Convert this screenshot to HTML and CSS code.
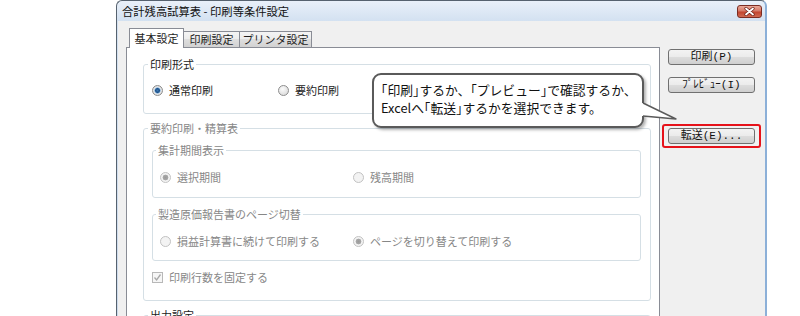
FILE: index.html
```html
<!DOCTYPE html>
<html lang="ja">
<head>
<meta charset="utf-8">
<title>合計残高試算表 - 印刷等条件設定</title>
<link rel="stylesheet" href="styles.css">
</head>
<body>
<div class="win">
  <div class="titlebar">
    <span class="title">合計残高試算表 - 印刷等条件設定</span>
    <span class="close"><svg width="11" height="9" viewBox="0 0 11 9"><path d="M2 1.5 L9 7.5 M9 1.5 L2 7.5" stroke="#6b2018" stroke-width="3.2" stroke-linecap="round"/><path d="M2 1.5 L9 7.5 M9 1.5 L2 7.5" stroke="#fff" stroke-width="1.8" stroke-linecap="round"/></svg></span>
  </div>
  <div class="client">
    <div class="main">
      <div class="tabs">
        <div class="tab active t1">基本設定</div>
        <div class="tab t2">印刷設定</div>
        <div class="tab t3">プリンタ設定</div>
      </div>
      <div class="panel">
        <fieldset class="fs1">
          <legend>印刷形式</legend>
          <div class="row">
            <div class="opt"><span class="rb on"></span>通常印刷</div>
            <div class="opt"><span class="rb"></span>要約印刷</div>
          </div>
        </fieldset>
        <fieldset class="fs2 dis">
          <legend>要約印刷・精算表</legend>
          <fieldset class="in">
            <legend>集計期間表示</legend>
            <div class="row">
              <div class="opt"><span class="rb on"></span>選択期間</div>
              <div class="opt"><span class="rb"></span>残高期間</div>
            </div>
          </fieldset>
          <fieldset class="in in2">
            <legend>製造原価報告書のページ切替</legend>
            <div class="row">
              <div class="opt"><span class="rb"></span>損益計算書に続けて印刷する</div>
              <div class="opt"><span class="rb on"></span>ページを切り替えて印刷する</div>
            </div>
          </fieldset>
          <div class="row chk">
            <div class="opt"><span class="cb"><svg width="9" height="9" viewBox="0 0 9 9"><path d="M1.5 4.5 L3.6 7 L7.5 1.5" fill="none" stroke="#a8a8a8" stroke-width="1.3"/></svg></span>印刷行数を固定する</div>
          </div>
        </fieldset>
        <fieldset class="fs3">
          <legend>出力設定</legend>
        </fieldset>
      </div>
    </div>
    <div class="side">
      <div class="btn">印刷(P)</div>
      <div class="btn">ﾌﾟﾚﾋﾞｭｰ(I)</div>
      <div class="hl"><div class="btn">転送(E)...</div></div>
    </div>
  </div>
</div>
<div class="callout"><span class="h">「</span>印刷<span class="h">」</span>するか、<span class="h">「</span>プレビュー<span class="h">」</span>で確認するか、<br>Excelへ<span class="h">「</span>転送<span class="h">」</span>するかを選択できます。</div>
<svg class="tail" width="40" height="26" viewBox="0 0 40 26"><polygon points="0,5 3,5 36,21 3,18 0,18" fill="#fff"/><path d="M3 5 L36 21 L3 18" fill="none" stroke="#5a5a5a" stroke-width="1.4" stroke-linejoin="round"/></svg>
</body>
</html>
```
FILE: styles.css
```css
* { box-sizing: border-box; }
html, body { margin: 0; padding: 0; }
body {
  width: 800px;
  height: 316px;
  overflow: hidden;
  position: relative;
  background: #fff;
  font-family: "Noto Sans CJK JP", "Noto Sans", sans-serif;
  font-size: 11px;
  color: #222;
}
.win {
  margin-left: 116px;
  width: 651px;
  height: 316px;
  border: 1px solid #56626f;
  border-right: 2px solid #8cb0d8;
  border-bottom: 0;
  border-radius: 6px 6px 0 0;
  background: linear-gradient(#e9f0f9, #d3e1f1 20px, #cddbec);
  display: flex;
  flex-direction: column;
  overflow: hidden;
}
.titlebar {
  flex: none;
  height: 20px;
  display: flex;
  align-items: center;
  justify-content: space-between;
  padding: 0 3px 0 5px;
}
.title { line-height: 14px; color: #111; font-size: 11.3px; }
.close {
  width: 25px;
  height: 13px;
  border: 1px solid #7a2c22;
  border-radius: 3px;
  background: linear-gradient(#eaa898, #d57a68 45%, #c2452f 55%, #d06a52);
  display: flex;
  align-items: center;
  justify-content: center;
}
.client {
  flex: 1;
  margin-left: 1px;
  background: #f0f0f0;
  display: flex;
  padding: 7px 0 0 8px;
}
.main {
  width: 534px;
  display: flex;
  flex-direction: column;
}
.tabs {
  height: 20px;
  display: flex;
  align-items: flex-end;
  margin: 0 0 -1px 3px;
  position: relative;
  z-index: 1;
}
.tab {
  height: 16px;
  margin-bottom: 1px;
  border: 1px solid #898c95;
  border-bottom: 0;
  background: linear-gradient(#f4f4f4, #ececec 50%, #dedede 50%, #d2d2d2);
  line-height: 14px;
  text-align: center;
  color: #1e1e1e;
}
.tab.active {
  height: 20px;
  margin-bottom: 0;
  background: #fff;
  line-height: 18px;
}
.t1 { width: 55px; }
.t2 { width: 57px; margin-left: -1px; }
.t3 { width: 73px; margin-left: -1px; }
.panel {
  flex: 1;
  background: #fff;
  border: 1px solid #898c95;
  border-bottom: 0;
  padding: 9px 8px 0 16px;
}
fieldset {
  margin: 0;
  min-width: 0;
  border: 1px solid #d5dfe5;
  border-radius: 3px;
  padding: 0;
}
legend {
  padding: 0 2px;
  margin-left: -4px;
  line-height: 14px;
}
.fs1 { padding: 12px 8px 16px; }
.fs2 { margin-top: 7px; padding: 8px 9px 16px 8px; }
.in { padding: 13px 8px 13px 7px; }
.in2 { margin-top: 9px; padding-bottom: 12px; }
.fs3 { margin-top: 7px; height: 40px; padding: 0 8px; }
.fs3 legend { margin-top: 2px; }
.dis { color: #878787; }
.row { display: flex; align-items: center; height: 14px; }
.opt { display: flex; align-items: center; gap: 6px; white-space: nowrap; }
.fs1 .opt:first-child { width: 126px; }
.in .opt:first-child { width: 193px; }
.chk { margin-top: 9px; }
.rb {
  flex: none;
  width: 11px;
  height: 11px;
  border-radius: 50%;
  border: 1px solid #8d8d8d;
  background: radial-gradient(circle at 40% 35%, #fbfbfb, #d4d4d4);
}
.rb.on {
  background: radial-gradient(circle at 50% 50%, #3b78b4 0, #1f5288 2px, #7fb0dc 2.8px, #eaeaea 3.4px, #d8d8d8 5px);
}
.dis .rb { border-color: #c2c2c2; background: #f3f3f3; }
.dis .rb.on { background: radial-gradient(circle at 50% 50%, #9a9a9a 0, #a8a8a8 2.6px, #f3f3f3 3.2px); }
.cb {
  flex: none;
  width: 11px;
  height: 11px;
  border: 1px solid #b8b8b8;
  background: #f6f6f6;
  display: flex;
  align-items: center;
  justify-content: center;
}
.side {
  width: 105px;
  padding-top: 21px;
  display: flex;
  flex-direction: column;
}
.btn {
  margin-left: 8px;
  width: 87px;
  height: 16px;
  border: 1px solid #707070;
  border-radius: 3px;
  background: linear-gradient(#f3f3f3, #ebebeb 50%, #dddddd 50%, #cfcfcf);
  font-family: "Liberation Mono", "Noto Sans CJK JP", monospace;
  font-size: 11px;
  line-height: 14px;
  text-align: center;
  color: #111;
}
.btn + .btn { margin-top: 12px; }
.hl {
  margin: 31px 0 0 2px;
  width: 99px;
  border: 2px solid #e6121a;
  border-radius: 3px;
  padding: 2px 4px;
}
.hl .btn { margin: 0; }
.callout {
  position: absolute;
  left: 372px;
  top: 73px;
  width: 272px;
  height: 55px;
  border: 2px solid #5a5a5a;
  border-radius: 9px;
  background: #fff;
  box-shadow: 2px 2px 3px rgba(0, 0, 0, 0.3);
  padding: 6px 0 0 7px;
  font-size: 12.8px;
  line-height: 18px;
  color: #111;
  white-space: nowrap;
}
.h { font-feature-settings: "halt"; }
.tail {
  position: absolute;
  left: 640px;
  top: 98px;
}
```
